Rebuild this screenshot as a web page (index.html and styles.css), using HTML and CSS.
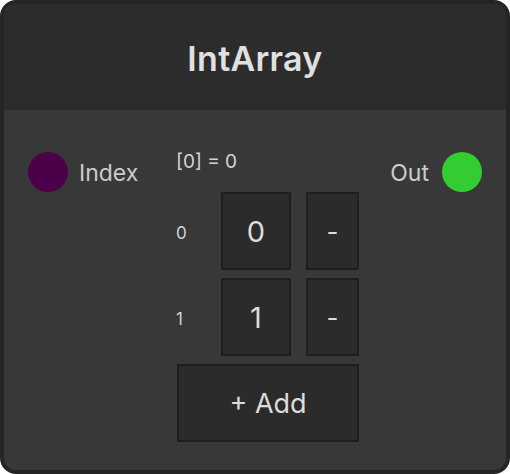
FILE: index.html
```html
<!DOCTYPE html>
<html>
<head>
<meta charset="utf-8">
<link rel="stylesheet" href="styles.css">
</head>
<body>
<div class="node">
  <div class="header"><span class="title">IntArray</span></div>
  <div class="content">
    <div class="port port-in">
      <span class="dot dot-in"></span>
      <span class="port-label">Index</span>
    </div>
    <div class="array">
      <div class="summary">[0] = 0</div>
      <div class="row">
        <span class="idx">0</span>
        <div class="box val">0</div>
        <div class="box rm">-</div>
      </div>
      <div class="row">
        <span class="idx">1</span>
        <div class="box val">1</div>
        <div class="box rm">-</div>
      </div>
      <div class="box add">+ Add</div>
    </div>
    <div class="port port-out">
      <span class="port-label">Out</span>
      <span class="dot dot-out"></span>
    </div>
  </div>
</div>
</body>
</html>
```
FILE: styles.css
```css
html, body {
  margin: 0;
  padding: 0;
  background: #ffffff;
}
body {
  font-family: Inter, "Noto Sans", sans-serif;
  color: #d4d4d4;
}
.node {
  box-sizing: border-box;
  width: 510px;
  height: 474px;
  border: 4px solid #252525;
  border-radius: 16px;
  background: #383838;
  overflow: hidden;
  display: flex;
  flex-direction: column;
}
.header {
  height: 106px;
  background: #2c2c2c;
  display: flex;
  align-items: center;
  justify-content: center;
}
.title {
  font-size: 34px;
  font-weight: 600;
  color: #e0e0e0;
  letter-spacing: 0.3px;
  margin-top: 2px;
}
.content {
  flex: 1;
  display: flex;
  align-items: flex-start;
  padding: 42px 24px 0 24px;
}
.port {
  display: flex;
  align-items: center;
  gap: 11px;
  height: 40px;
}
.port-in {
  width: 111px;
}
.dot {
  width: 40px;
  height: 40px;
  border-radius: 50%;
  flex: none;
}
.dot-in { background: #4b0049; }
.dot-out { background: #33cc33; }
.port-label {
  font-size: 23px;
  color: #cccccc;
  margin-top: 2px;
}
.port-out {
  margin-left: auto;
  gap: 13px;
}
.array {
  margin-left: 37px;
  display: flex;
  flex-direction: column;
  gap: 8px;
}
.summary {
  font-size: 19px;
  line-height: 20px;
  height: 32px;
  color: #d4d4d4;
}
.row {
  display: flex;
  align-items: center;
}
.idx {
  width: 45px;
  font-size: 17px;
  color: #d4d4d4;
  margin-top: 4px;
}
.box {
  box-sizing: border-box;
  height: 78px;
  background: #2b2b2b;
  border: 2px solid #1f1f1f;
  display: flex;
  align-items: center;
  justify-content: center;
  color: #dcdcdc;
}
.val {
  width: 70px;
  font-size: 29px;
}
.rm {
  width: 53px;
  margin-left: 15px;
  font-size: 26px;
}
.add {
  width: 182px;
  margin-left: 1px;
  font-size: 27px;
}
```
